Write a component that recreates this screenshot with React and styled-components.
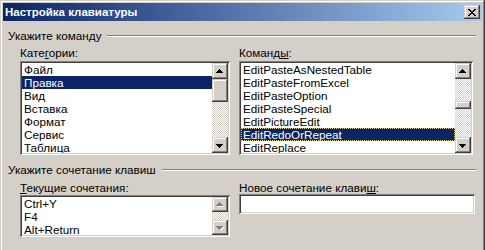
import styled, { createGlobalStyle } from "styled-components";

const GlobalStyle = createGlobalStyle`
  html, body {
    margin: 0;
    background: #d4d0c8;
    overflow: hidden;
  }
  body {
    font-family: "Liberation Sans", Arial, sans-serif;
    font-size: 11.7px;
    color: #000;
  }
`;

const raised = `
  box-shadow: inset -1px -1px #404040, inset 1px 1px #d4d0c8,
    inset -2px -2px #808080, inset 2px 2px #ffffff;
`;

const sunken = `
  box-shadow: inset 1px 1px #808080, inset -1px -1px #ffffff,
    inset 2px 2px #404040, inset -2px -2px #d4d0c8;
`;

const Window = styled.div`
  width: 485px;
  height: 262px;
  box-sizing: border-box;
  padding: 3px;
  background: #d4d0c8;
  box-shadow: inset -1px -1px #404040, inset 1px 1px #d4d0c8,
    inset -2px -2px #808080, inset 2px 2px #ffffff;
`;

const TitleBar = styled.div`
  height: 18px;
  display: flex;
  align-items: center;
  justify-content: space-between;
  padding: 0 2px 0 2px;
  background: linear-gradient(to right, #0a246a, #a6caf0);
`;

const Title = styled.div`
  color: #fff;
  font-weight: bold;
  font-size: 11.5px;
  line-height: 13px;
  padding-top: 1px;
`;

const CloseButton = styled.div`
  width: 16px;
  height: 14px;
  display: flex;
  align-items: center;
  justify-content: center;
  background: #d4d0c8;
  ${raised}
`;

const Content = styled.div`
  padding: 8px 6px 0 5px;
  display: flex;
  flex-direction: column;
`;

const Heading = styled.div`
  display: flex;
  align-items: center;
  gap: 6px;
  line-height: 13px;
  margin-top: ${(p) => p.$top || 0}px;
`;

const Rule = styled.div`
  flex: 1;
  border-top: 1px solid #808080;
  border-bottom: 1px solid #ffffff;
  margin-top: 1px;
`;

const Columns = styled.div`
  display: flex;
  gap: 9px;
  padding-left: 12px;
  margin-top: ${(p) => p.$top}px;
`;

const Column = styled.div`
  width: ${(p) => p.$width}px;
  display: flex;
  flex-direction: column;
`;

const Label = styled.div`
  line-height: 13px;
  white-space: nowrap;
  u {
    text-decoration: underline;
    text-underline-offset: 1px;
  }
`;

const ListBox = styled.div`
  margin-top: ${(p) => p.$top}px;
  height: ${(p) => p.$height}px;
  box-sizing: border-box;
  padding: 2px;
  background: #fff;
  display: flex;
  ${sunken}
`;

const Items = styled.div`
  flex: 1;
  overflow: hidden;
`;

const Item = styled.div`
  height: 13px;
  line-height: 13px;
  padding-left: 2px;
  white-space: nowrap;
  box-sizing: border-box;
  background: ${(p) => (p.$selected ? "#0a246a" : "transparent")};
  color: ${(p) => (p.$selected ? "#fff" : "#000")};
  outline: ${(p) => (p.$focus ? "1px dotted #e6d27a" : "none")};
  outline-offset: -1px;
`;

const ScrollBar = styled.div`
  width: 16px;
  display: flex;
  flex-direction: column;
  background-color: #fff;
  background-image: conic-gradient(
    #d4d0c8 25%,
    #ffffff 0 50%,
    #d4d0c8 0 75%,
    #ffffff 0
  );
  background-size: 2px 2px;
`;

const ScrollButton = styled.div`
  height: ${(p) => p.$h || 16}px;
  flex-shrink: 0;
  display: flex;
  align-items: center;
  justify-content: center;
  background: #d4d0c8;
  ${raised}
`;

const Track = styled.div`
  flex: 1;
  position: relative;
`;

const Thumb = styled.div`
  position: absolute;
  left: 0;
  right: 0;
  background: #d4d0c8;
  ${raised}
`;

const TextInput = styled.div`
  height: 20px;
  width: 236px;
  background: #fff;
  box-sizing: border-box;
  ${sunken}
`;

function Arrow({ down, disabled }) {
  const d = "M3 0h1v1h1v1h1v1h1v1H0V3h1V2h1V1h1z";
  return (
    <svg
      width="8"
      height="5"
      viewBox="0 0 8 5"
      shapeRendering="crispEdges"
      style={{ transform: down ? "scaleY(-1)" : "none" }}
    >
      {disabled && <path d={d} fill="#fff" transform={down ? "translate(1,-1)" : "translate(1,1)"} />}
      <path d={d} fill={disabled ? "#808080" : "#000"} />
    </svg>
  );
}

function Scroller({ thumbTop, thumbHeight, disabled, buttonHeight }) {
  return (
    <ScrollBar>
      <ScrollButton $h={buttonHeight}>
        <Arrow disabled={disabled} />
      </ScrollButton>
      <Track>
        {!disabled && (
          <Thumb style={{ top: thumbTop, height: thumbHeight }} />
        )}
      </Track>
      <ScrollButton $h={buttonHeight}>
        <Arrow down disabled={disabled} />
      </ScrollButton>
    </ScrollBar>
  );
}

const categories = ["Файл", "Правка", "Вид", "Вставка", "Формат", "Сервис", "Таблица"];
const commands = [
  "EditPasteAsNestedTable",
  "EditPasteFromExcel",
  "EditPasteOption",
  "EditPasteSpecial",
  "EditPictureEdit",
  "EditRedoOrRepeat",
  "EditReplace",
];
const shortcuts = ["Ctrl+Y", "F4", "Alt+Return"];

export default function App() {
  return (
    <>
      <GlobalStyle />
      <Window>
        <TitleBar>
          <Title>Настройка клавиатуры</Title>
          <CloseButton>
            <svg width="8" height="7" viewBox="0 0 8 7" shapeRendering="crispEdges">
              <path
                d="M0 0h2v1h1v1h2V1h1V0h2v1H7v1H6v1H5v1h1v1h1v1h1v1H6V6H5V5H3v1H2v1H0V6h1V5h1V4h1V3H2V2H1V1H0z"
                fill="#000"
              />
            </svg>
          </CloseButton>
        </TitleBar>
        <Content>
          <Heading>
            Укажите команду
            <Rule />
          </Heading>
          <Columns $top={4}>
            <Column $width={210}>
              <Label>
                Кате<u>г</u>ории:
              </Label>
              <ListBox $top={2} $height={94}>
                <Items>
                  {categories.map((c, i) => (
                    <Item key={c} $selected={i === 1}>
                      {c}
                    </Item>
                  ))}
                </Items>
                <Scroller thumbTop={0} thumbHeight={23} />
              </ListBox>
            </Column>
            <Column $width={234}>
              <Label>
                Команд<u>ы</u>:
              </Label>
              <ListBox $top={2} $height={94}>
                <Items>
                  {commands.map((c, i) => (
                    <Item key={c} $selected={i === 5} $focus={i === 5}>
                      {c}
                    </Item>
                  ))}
                </Items>
                <Scroller thumbTop={22} thumbHeight={8} />
              </ListBox>
            </Column>
          </Columns>
          <Heading $top={8}>
            Укажите сочетание клавиш
            <Rule />
          </Heading>
          <Columns $top={5}>
            <Column $width={210}>
              <Label>
                <u>Т</u>екущие сочетания:
              </Label>
              <ListBox $top={1} $height={42}>
                <Items>
                  {shortcuts.map((c) => (
                    <Item key={c}>{c}</Item>
                  ))}
                </Items>
                <Scroller disabled buttonHeight={15} />
              </ListBox>
            </Column>
            <Column $width={234}>
              <Label>
                Новое сочетание клави<u>ш</u>:
              </Label>
              <TextInput />
            </Column>
          </Columns>
        </Content>
      </Window>
    </>
  );
}
